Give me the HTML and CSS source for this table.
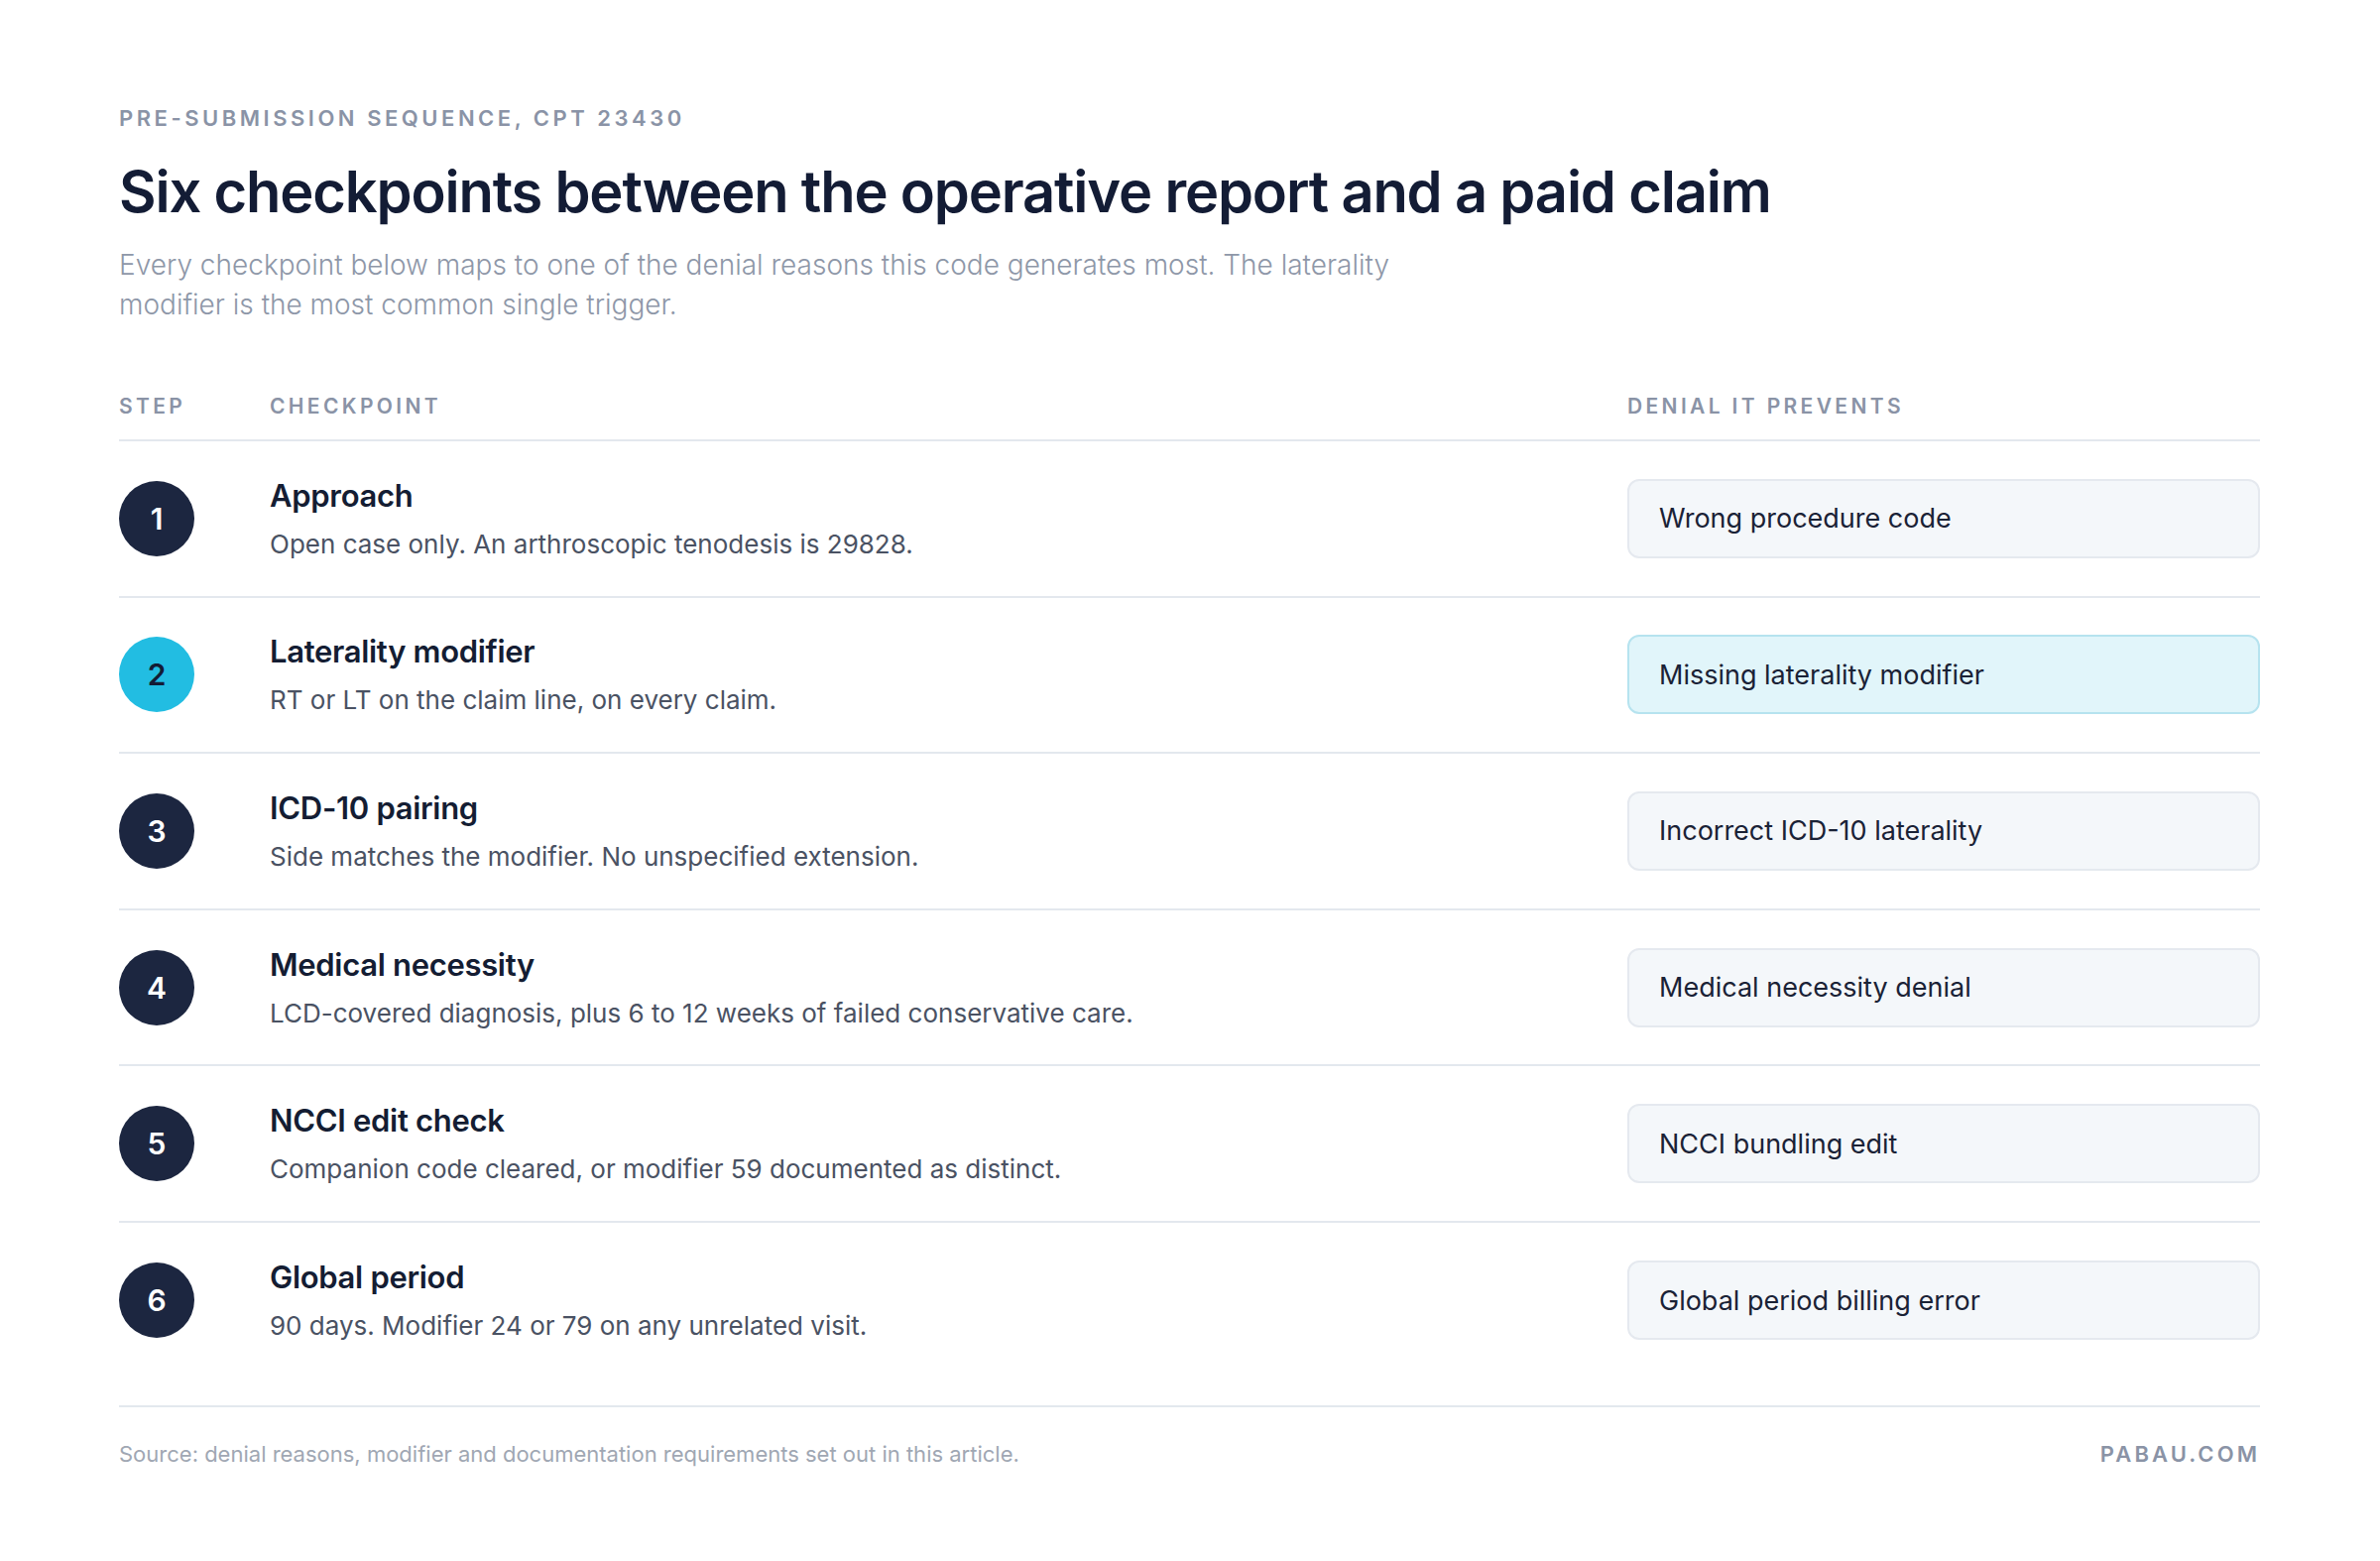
FILE: index.html
```html
<!DOCTYPE html>
<html lang="en">
<head>
<meta charset="utf-8">
<title>Six checkpoints between the operative report and a paid claim</title>
<link rel="stylesheet" href="styles.css">
</head>
<body>
<main class="page">
  <header class="intro">
    <p class="eyebrow">PRE-SUBMISSION SEQUENCE, CPT 23430</p>
    <h1 class="title">Six checkpoints between the operative report and a paid claim</h1>
    <p class="lede">Every checkpoint below maps to one of the denial reasons this code generates most. The laterality modifier is the most common single trigger.</p>
  </header>

  <section class="table">
    <div class="thead">
      <span>STEP</span>
      <span>CHECKPOINT</span>
      <span>DENIAL IT PREVENTS</span>
    </div>

    <div class="row">
      <div class="step">1</div>
      <div class="check">
        <h2 class="check-title">Approach</h2>
        <p class="check-desc">Open case only. An arthroscopic tenodesis is 29828.</p>
      </div>
      <div class="denial">Wrong procedure code</div>
    </div>

    <div class="row row-hl">
      <div class="step">2</div>
      <div class="check">
        <h2 class="check-title">Laterality modifier</h2>
        <p class="check-desc">RT or LT on the claim line, on every claim.</p>
      </div>
      <div class="denial">Missing laterality modifier</div>
    </div>

    <div class="row">
      <div class="step">3</div>
      <div class="check">
        <h2 class="check-title">ICD-10 pairing</h2>
        <p class="check-desc">Side matches the modifier. No unspecified extension.</p>
      </div>
      <div class="denial">Incorrect ICD-10 laterality</div>
    </div>

    <div class="row">
      <div class="step">4</div>
      <div class="check">
        <h2 class="check-title">Medical necessity</h2>
        <p class="check-desc">LCD-covered diagnosis, plus 6 to 12 weeks of failed conservative care.</p>
      </div>
      <div class="denial">Medical necessity denial</div>
    </div>

    <div class="row">
      <div class="step">5</div>
      <div class="check">
        <h2 class="check-title">NCCI edit check</h2>
        <p class="check-desc">Companion code cleared, or modifier 59 documented as distinct.</p>
      </div>
      <div class="denial">NCCI bundling edit</div>
    </div>

    <div class="row">
      <div class="step">6</div>
      <div class="check">
        <h2 class="check-title">Global period</h2>
        <p class="check-desc">90 days. Modifier 24 or 79 on any unrelated visit.</p>
      </div>
      <div class="denial">Global period billing error</div>
    </div>
  </section>

  <footer class="foot">
    <p class="source">Source: denial reasons, modifier and documentation requirements set out in this article.</p>
    <p class="brand">PABAU.COM</p>
  </footer>
</main>
</body>
</html>
```

FILE: styles.css
```css
* { box-sizing: border-box; }

html, body {
  margin: 0;
  padding: 0;
  background: #ffffff;
}

body {
  font-family: "Inter", "Liberation Sans", sans-serif;
  color: #131c35;
}

.page {
  width: 2400px;
  padding: 106px 121px 0 120px;
}

.eyebrow {
  margin: 0;
  font-size: 22px;
  line-height: 26px;
  font-weight: 600;
  letter-spacing: 0.16em;
  color: #8a93a6;
}

.title {
  margin: 27px 0 0;
  font-size: 57.8px;
  line-height: 68px;
  font-weight: 600;
  letter-spacing: -0.02em;
  color: #131c35;
}

.lede {
  margin: 20px 0 0;
  max-width: 1300px;
  font-size: 28px;
  line-height: 40px;
  font-weight: 300;
  color: #8e97a8;
}

.table {
  margin-top: 71px;
}

.thead {
  display: grid;
  grid-template-columns: 152px 1fr 638px;
  align-items: center;
  padding-bottom: 21px;
  border-bottom: 2px solid #e3e8ee;
  font-size: 21px;
  line-height: 24px;
  font-weight: 600;
  letter-spacing: 0.16em;
  color: #8a93a6;
}

.row {
  display: grid;
  grid-template-columns: 152px 1fr 638px;
  align-items: center;
  height: 157.6px;
  border-bottom: 2px solid #e3e8ee;
}

.row:last-child {
  border-bottom: none;
  height: 157px;
}

.step {
  width: 76px;
  height: 76px;
  border-radius: 50%;
  background: #1c2640;
  color: #ffffff;
  display: flex;
  align-items: center;
  justify-content: center;
  font-size: 30px;
  font-weight: 600;
}

.row-hl .step {
  background: #22bde2;
  color: #131c35;
}

.check-title {
  margin: 0;
  font-size: 31px;
  line-height: 40px;
  font-weight: 600;
  letter-spacing: -0.01em;
  color: #141d33;
}

.check-desc {
  margin: 12px 0 0;
  font-size: 26px;
  line-height: 34px;
  font-weight: 400;
  color: #4a5263;
}

.denial {
  height: 80px;
  display: flex;
  align-items: center;
  padding: 0 30px;
  background: #f4f7fa;
  border: 2px solid #e5e9ef;
  border-radius: 12px;
  font-size: 27px;
  font-weight: 400;
  color: #1a2236;
}

.row-hl .denial {
  background: #e1f5fa;
  border-color: #b6e3ef;
}

.foot {
  margin-top: 27px;
  border-top: 2px solid #e3e8ee;
  display: flex;
  justify-content: space-between;
  align-items: center;
  padding-top: 33px;
}

.source {
  margin: 0;
  font-size: 22px;
  line-height: 28px;
  font-weight: 400;
  color: #a0a7b3;
}

.brand {
  margin: 0;
  font-size: 22px;
  line-height: 28px;
  font-weight: 600;
  letter-spacing: 0.14em;
  color: #8a93a6;
}
```
